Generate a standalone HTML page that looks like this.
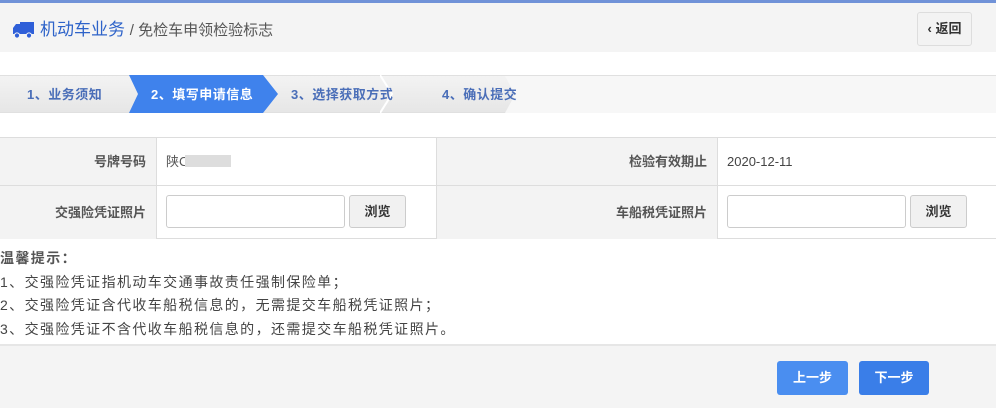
<!DOCTYPE html>
<html><head><meta charset="utf-8"><style>
*{margin:0;padding:0;box-sizing:border-box}
body{width:996px;height:408px;background:#fff;font-family:"Liberation Sans","Noto Sans CJK SC",sans-serif;position:relative;overflow:hidden;color:#333}
.topline{position:absolute;left:0;top:0;width:996px;height:3px;background:#7092d8}
.hdr{position:absolute;left:0;top:3px;width:996px;height:49px;background:#f4f4f4}
.title{position:absolute;left:40px;top:16px;font-size:17px;color:#2e63c9;line-height:22px}
.title span{color:#555;font-size:15px}
.back{position:absolute;left:917px;top:9px;width:55px;height:34px;border:1px solid #ddd;border-radius:3px;background:#f3f3f3;font-size:13px;font-weight:bold;color:#333;text-align:center;line-height:32px}
.steps{position:absolute;left:0;top:75px;width:996px;height:38px;background:linear-gradient(#f3f3f3,#e6e6e6);border-top:1px solid #e0e0e0;border-bottom:1px solid #e0e0e0}
.st{position:absolute;top:0;height:37px;line-height:37px;font-size:13px;font-weight:bold;color:#4a6eb8;letter-spacing:0.5px}
.act{position:absolute;left:129px;top:75px;width:149px;height:38px;background:#3f82ec;clip-path:polygon(0 0,134px 0,149px 50%,134px 100%,0 100%,9px 50%)}
.sep{position:absolute;top:75px;height:38px;width:14px}
.tbl{position:absolute;left:0;top:137px;width:996px;height:102px;border-top:1px solid #ddd;border-bottom:1px solid #ddd}
.c{position:absolute;font-size:13px;line-height:20px}
.lab{background:#f3f3f3;text-align:right;padding-right:10px;font-weight:bold;color:#555}
.inp{position:absolute;height:33px;border:1px solid #ccc;border-radius:3px;background:#fff}
.btn{position:absolute;height:33px;width:57px;border:1px solid #ccc;border-radius:3px;background:#f1f1f1;font-size:13px;font-weight:bold;text-align:center;line-height:31px;color:#333}
.tips{position:absolute;left:0;top:247px;font-size:14px;line-height:23.5px;color:#444;letter-spacing:1.4px}
.foot{position:absolute;left:0;top:344px;width:996px;height:64px;background:#f4f4f4;border-top:2px solid #e6e6e6}
.b{position:absolute;top:15px;height:34px;width:71px;border-radius:3px;background:#3f84ee;color:#fff;font-size:13px;font-weight:bold;text-align:center;line-height:34px}
</style></head><body>
<div class="topline"></div>
<div class="hdr">
<svg style="position:absolute;left:12px;top:18px" width="23" height="18" viewBox="0 0 23 18"><path d="M8 1h14v12H8z" fill="#2f5fd8"/><path d="M1 7l3-4h5v10H1z" fill="#2f5fd8"/><circle cx="5" cy="14.5" r="2.6" fill="#2f5fd8" stroke="#f4f4f4" stroke-width="1"/><circle cx="17" cy="14.5" r="2.6" fill="#2f5fd8" stroke="#f4f4f4" stroke-width="1"/></svg>
<div class="title">机动车业务 <span>/ 免检车申领检验标志</span></div>
<div class="back">‹ 返回</div>
</div>
<div class="steps"></div>
<div class="act"></div>
<svg class="sep" style="left:380px" viewBox="0 0 14 38"><path d="M0 0L12 19L0 38" fill="none" stroke="#fff" stroke-width="2"/></svg>
<svg style="position:absolute;left:505px;top:76px" width="491" height="37"><path d="M0 0L10 18.5L0 37H491V0z" fill="#f7f7f7"/></svg>
<div class="st" style="left:27px;top:76px">1、业务须知</div>
<div class="st" style="left:151px;top:76px;color:#fff">2、填写申请信息</div>
<div class="st" style="left:291px;top:76px">3、选择获取方式</div>
<div class="st" style="left:442px;top:76px">4、确认提交</div>
<div class="tbl">
<div class="c lab" style="left:0;top:0;width:156px;height:47px;line-height:47px">号牌号码</div>
<div class="c" style="left:166px;top:0;line-height:47px;color:#555">陕C</div>
<div style="position:absolute;left:185px;top:17px;width:46px;height:12px;background:#ddd"></div>
<div class="c lab" style="left:437px;top:0;width:280px;height:47px;line-height:47px">检验有效期止</div>
<div class="c" style="left:727px;top:0;line-height:47px;color:#444">2020-12-11</div>
<div class="c lab" style="left:0;top:48px;width:156px;height:53px;line-height:53px">交强险凭证照片</div>
<div class="inp" style="left:166px;top:57px;width:179px"></div>
<div class="btn" style="left:349px;top:57px">浏览</div>
<div class="c lab" style="left:437px;top:48px;width:280px;height:53px;line-height:53px">车船税凭证照片</div>
<div class="inp" style="left:727px;top:57px;width:179px"></div>
<div class="btn" style="left:910px;top:57px">浏览</div>
<div style="position:absolute;left:0;top:47px;width:996px;height:1px;background:#ddd"></div>
<div style="position:absolute;left:156px;top:0;width:1px;height:101px;background:#ddd"></div>
<div style="position:absolute;left:436px;top:0;width:1px;height:101px;background:#ddd"></div>
<div style="position:absolute;left:717px;top:0;width:1px;height:101px;background:#ddd"></div>
</div>
<div class="tips"><b style="color:#555">温馨提示：</b><br>1、交强险凭证指机动车交通事故责任强制保险单；<br>2、交强险凭证含代收车船税信息的，无需提交车船税凭证照片；<br>3、交强险凭证不含代收车船税信息的，还需提交车船税凭证照片。</div>
<div class="foot">
<div class="b" style="left:777px;background:#4a8ef0">上一步</div>
<div class="b" style="left:859px;width:70px;background:#3a7ee8">下一步</div>
</div>
</body></html>
